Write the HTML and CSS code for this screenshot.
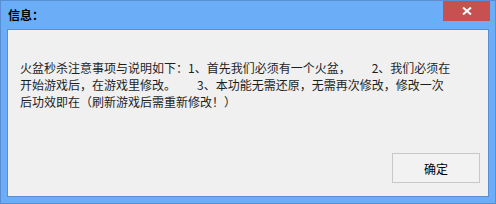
FILE: index.html
```html
<!DOCTYPE html>
<html lang="zh-CN">
<head>
    <meta charset="UTF-8">
    <title>信息</title>
    <link rel="stylesheet" href="styles.css">
</head>
<body>
    <div class="window">
        <div class="titlebar">
            <span class="title">信息：</span>
            <div class="close-btn">
                <svg width="10" height="8" viewBox="0 0 10 8">
                    <path d="M1 0.5 L9 7.5 M9 0.5 L1 7.5" stroke="#fff" stroke-width="2" fill="none"/>
                </svg>
            </div>
        </div>
        <div class="client">
            <p class="message">火盆秒杀注意事项与说明如下：1、首先我们必须有一个火盆，<span class="gap"></span>2、我们必须在<br>开始游戏后，在游戏里修改。<span class="gap"></span>3、本功能无需还原，无需再次修改，修改一次<br>后功效即在（刷新游戏后需重新修改！）</p>
            <div class="actions">
                <button class="ok-btn">确定</button>
            </div>
        </div>
    </div>
</body>
</html>
```
FILE: styles.css
```css
* {
    margin: 0;
    padding: 0;
    box-sizing: border-box;
}

body {
    font-family: "Noto Sans CJK SC", "Liberation Sans", sans-serif;
    background: #6badf6;
}

.window {
    width: 496px;
    height: 204px;
    background: #6badf6;
    border: 1px solid #5a8ed2;
    display: flex;
    flex-direction: column;
}

.titlebar {
    height: 28px;
    display: flex;
    align-items: flex-start;
    justify-content: space-between;
}

.title {
    font-size: 12px;
    font-weight: bold;
    color: #000;
    line-height: 16px;
    padding: 6px 0 0 7px;
}

.close-btn {
    width: 47px;
    height: 20px;
    margin-right: 5px;
    background: #c75050;
    display: flex;
    align-items: center;
    justify-content: center;
}

.client {
    flex: 1;
    margin: 0 6px 6px 6px;
    border: 1px solid #5a8ed2;
    background: #f0f0f0;
    display: flex;
    flex-direction: column;
    padding: 29px 8px 13px 12px;
}

.message {
    font-size: 12px;
    line-height: 17px;
    color: #1e1e1e;
}

.gap {
    display: inline-block;
    width: 21px;
}

.actions {
    margin-top: auto;
    display: flex;
    justify-content: flex-end;
}

.ok-btn {
    width: 88px;
    height: 30px;
    border: 1px solid #c8c8c8;
    background: #f2f2f2;
    font-family: inherit;
    font-size: 12px;
    color: #000;
}
```
